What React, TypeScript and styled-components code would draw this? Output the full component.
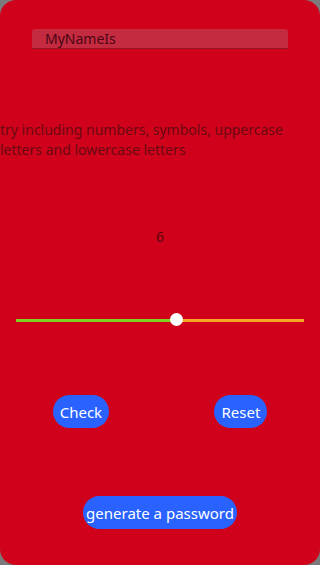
import React, { useState } from "react";
import styled, { createGlobalStyle } from "styled-components";

const GlobalStyle = createGlobalStyle`
  html, body {
    margin: 0;
    padding: 0;
    background: #7b7b7b;
  }
  body {
    font-family: "Noto Sans", "Open Sans", sans-serif;
  }
`;

const Screen = styled.div`
  width: 320px;
  height: 565px;
  background-color: #d0021b;
  border-radius: 16px;
  overflow: hidden;
  display: flex;
  flex-direction: column;
`;

const NameInput = styled.input`
  margin: 29px 32px 0;
  height: 20px;
  padding: 0 0 0 13px;
  box-sizing: border-box;
  border: none;
  border-bottom: 1px solid #9a1428;
  border-radius: 3px 3px 0 0;
  background-color: #c42a40;
  color: #4a0712;
  font-family: inherit;
  font-size: 14px;
  outline: none;
`;

const Hint = styled.p`
  margin: 71px 0 0;
  font-size: 14px;
  line-height: 20px;
  color: #6a0912;
`;

const Length = styled.div`
  margin-top: 67px;
  text-align: center;
  font-size: 14px;
  line-height: 20px;
  color: #5a0510;
`;

const SliderWrap = styled.div`
  margin: 66px 16px 0;
  height: 14px;
  position: relative;
  display: flex;
  align-items: center;
`;

const Fill = styled.div`
  height: 3px;
  background-color: #7ed321;
`;

const Rest = styled.div`
  flex: 1;
  height: 3px;
  background-color: #f5a623;
`;

const Thumb = styled.div`
  position: absolute;
  top: 0;
  width: 13px;
  height: 13px;
  margin-left: -6px;
  border-radius: 50%;
  background-color: #ffffff;
`;

const ButtonRow = styled.div`
  margin-top: 68px;
  display: flex;
  justify-content: space-around;
`;

const Button = styled.button<{ wide?: boolean }>`
  height: 33px;
  padding: 0 ${props => (props.wide ? "3px" : "7px")};
  border: none;
  border-radius: 17px;
  background-color: #2962ff;
  color: #ffffff;
  font-family: inherit;
  font-size: 15px;
`;

const GenerateRow = styled.div`
  margin-top: 68px;
  display: flex;
  justify-content: center;
`;

const MIN = 1;
const MAX = 10;

const App = () => {
  const [name, setName] = useState("MyNameIs");
  const [size] = useState(6);
  const percent = ((size - MIN) / (MAX - MIN)) * 100;

  return (
    <>
      <GlobalStyle />
      <Screen>
        <NameInput value={name} onChange={e => setName(e.target.value)} />
        <Hint>try including numbers, symbols, uppercase letters and lowercase letters</Hint>
        <Length>{size}</Length>
        <SliderWrap>
          <Fill style={{ width: `${percent}%` }} />
          <Rest />
          <Thumb style={{ left: `${percent}%` }} />
        </SliderWrap>
        <ButtonRow>
          <Button>Check</Button>
          <Button>Reset</Button>
        </ButtonRow>
        <GenerateRow>
          <Button wide>generate a password</Button>
        </GenerateRow>
      </Screen>
    </>
  );
};

export default App;
